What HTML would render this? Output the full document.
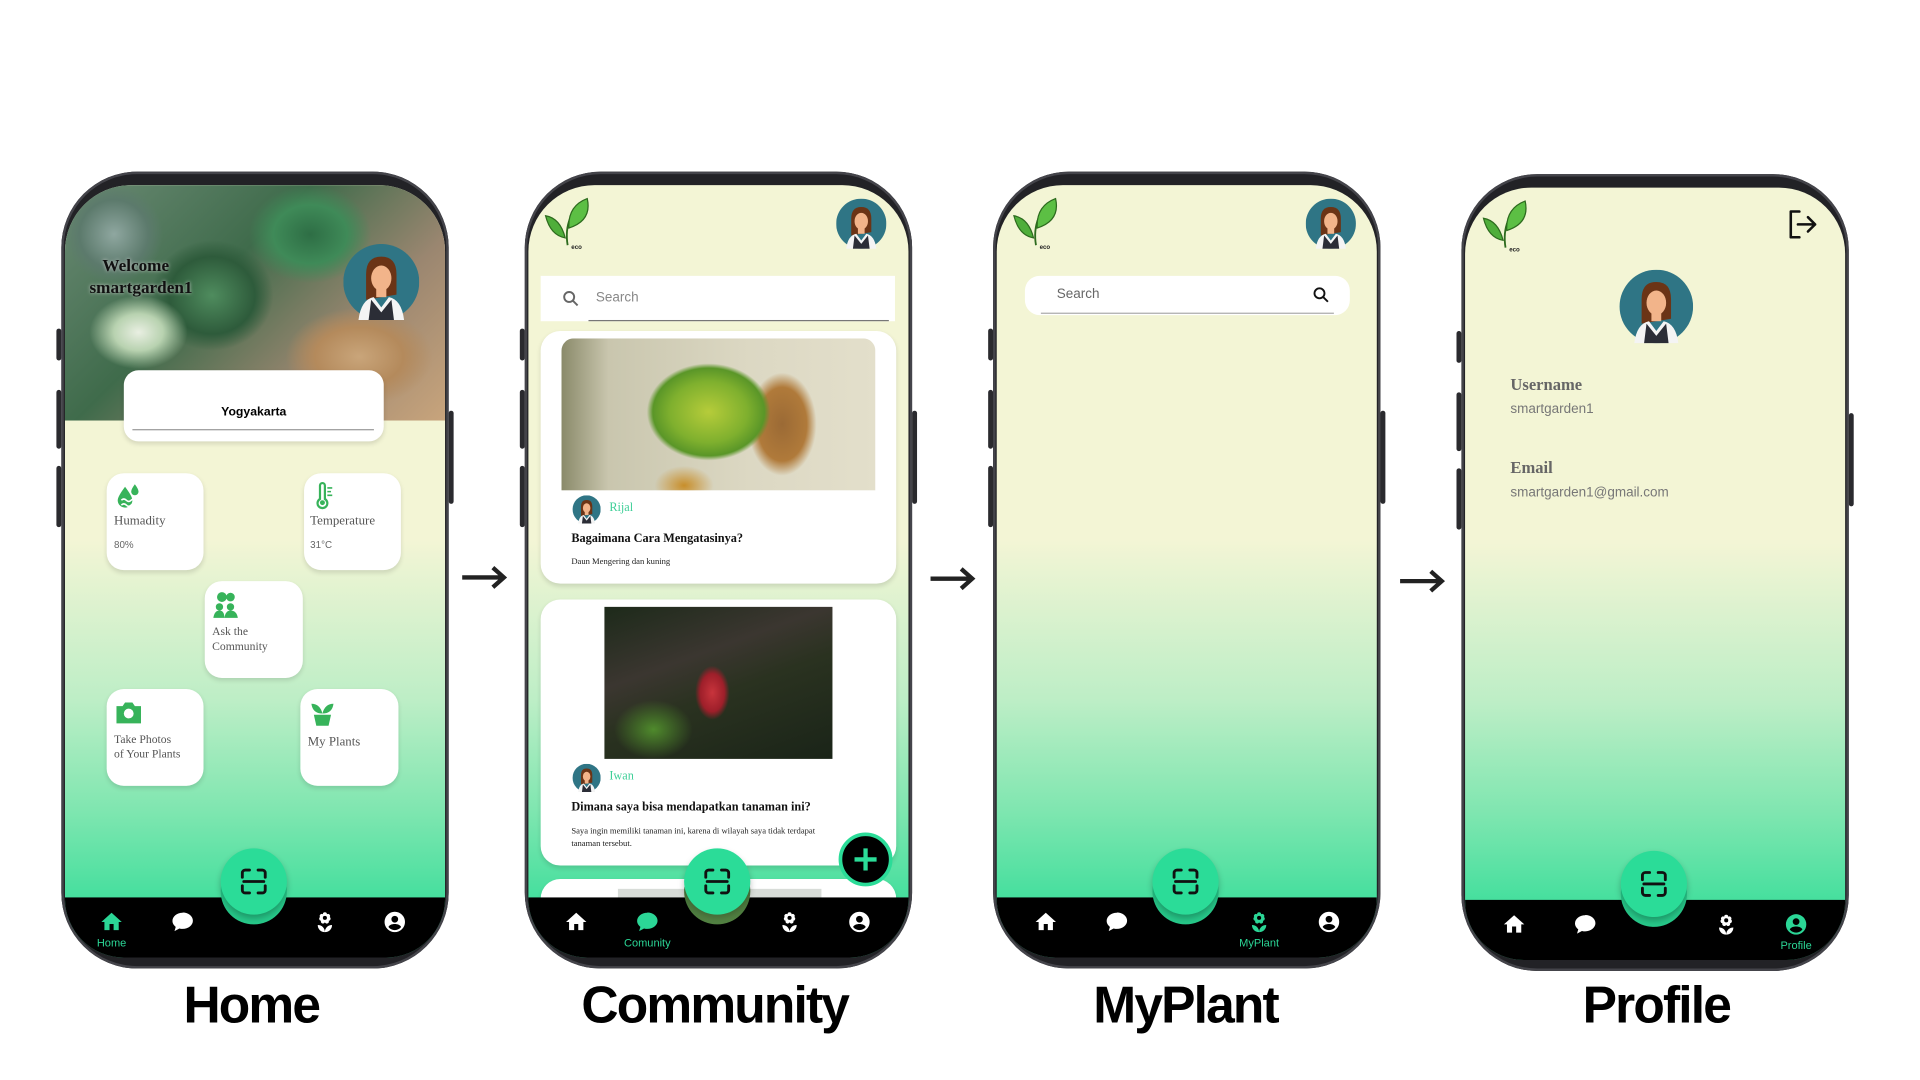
<!DOCTYPE html>
<html><head><meta charset="utf-8"><style>
*{margin:0;padding:0;box-sizing:border-box}
html,body{width:1920px;height:1080px;overflow:hidden;background:#fff}
#w{position:absolute;left:0;top:0;width:1552px;height:880px;transform:scale(1.226);transform-origin:0 0;font-family:"Liberation Sans",sans-serif}
.ab{position:absolute}
.phone{position:absolute;top:140px;width:316px;height:650px;border-radius:62px;background:#222226;box-shadow:inset 0 0 0 2px #44444a}
.btn{position:absolute;background:#2a2a2e;width:4px;border-radius:2px}
.scr{position:absolute;left:3px;top:11px;width:310px;height:630px;border-radius:54px 54px 48px 48px;overflow:hidden;background:linear-gradient(#f3f5d5 0px,#f3f5d5 290px,#bdeec6 420px,#7fe6b0 510px,#46df9e 581px)}
.nav{position:absolute;left:0;top:581px;width:310px;height:54px;background:#000}
.bump{position:absolute;left:127px;top:549px;width:54px;height:54px;border-radius:50%;background:#27c98a}
.fab{position:absolute;left:127px;top:541px;width:54px;height:54px;border-radius:50%;background:#2bdc98;box-shadow:0 3px 5px rgba(0,0,0,.25)}
.ni{position:absolute;top:591px;width:20px;height:20px}
.nl{position:absolute;top:613px;font-size:9px;color:#2bd696;width:60px;text-align:center}
.card{position:absolute;background:#fff;border-radius:14px;box-shadow:0 2px 4px rgba(0,0,0,.12)}
.serif{font-family:"Liberation Serif",serif}
.lbl{position:absolute;top:796px;font-weight:bold;font-size:42px;letter-spacing:-1.5px;text-align:center;width:320px;color:#000}
.arrow{position:absolute;width:40px;height:20px}
</style></head><body><div id="w">

<svg width="0" height="0" style="position:absolute">
<defs>
<symbol id="avatar" viewBox="0 0 60 60"><circle cx="30" cy="30" r="30" fill="#2f7585"/><path d="M18 24 Q18 10 30 10 Q42 10 42 24 L42 40 L18 44 Z" fill="#6b3416"/><ellipse cx="30" cy="27" rx="8" ry="10" fill="#f2b48a"/><path d="M22 20 Q30 12 38 20 L38 16 Q30 9 22 16Z" fill="#6b3416"/><rect x="26" y="34" width="8" height="8" fill="#f2b48a"/><path d="M12 60 Q14 44 24 42 L30 50 L36 42 Q46 44 48 60Z" fill="#f4f4f4"/><path d="M20 60 L22 44 L30 54 L38 44 L40 60Z" fill="#2b2d36"/></symbol>
<symbol id="scan" viewBox="0 0 24 24"><path d="M4 9V6a2 2 0 0 1 2-2h3M15 4h3a2 2 0 0 1 2 2v3M20 15v3a2 2 0 0 1-2 2h-3M9 20H6a2 2 0 0 1-2-2v-3M5 12h14" fill="none" stroke="#111" stroke-width="2" stroke-linecap="round"/></symbol>
<symbol id="home" viewBox="0 0 24 24"><path d="M10 20v-6h4v6h5v-8h3L12 3 2 12h3v8z"/></symbol>
<symbol id="chat" viewBox="0 0 24 24"><path d="M12 3C6.5 3 2 6.6 2 11c0 2.3 1.2 4.3 3.2 5.8L4 21l4.8-2.6c1 .3 2.1.4 3.2.4 5.5 0 10-3.6 10-8s-4.5-8-10-8z"/></symbol>
<symbol id="flower" viewBox="0 0 24 24"><path d="M12 2.5a2 2 0 0 1 2 2 2 2 0 0 1 2.8 2.7 2 2 0 0 1-1 3.6 2 2 0 0 1-3.8 1.5 2 2 0 0 1-3.8-1.5 2 2 0 0 1-1-3.6A2 2 0 0 1 10 4.5a2 2 0 0 1 2-2zM12 22c-4 0-7-3-7-7 4 0 7 3 7 7zm0 0c4 0 7-3 7-7-4 0-7 3-7 7z"/><circle cx="12" cy="8" r="2" fill="#000"/></symbol>
<symbol id="user" viewBox="0 0 24 24"><path d="M12 2a10 10 0 1 0 0 20 10 10 0 0 0 0-20zm0 4a3.3 3.3 0 1 1 0 6.6A3.3 3.3 0 0 1 12 6zm0 14a8 8 0 0 1-6.2-3c.6-2 3.5-3 6.2-3s5.6 1 6.2 3A8 8 0 0 1 12 20z"/></symbol>
<symbol id="logo" viewBox="0 0 40 44"><path d="M20 40 Q18 28 22 18" stroke="#2d6b1e" stroke-width="1.5" fill="none"/><path d="M18 34 Q6 32 2 16 Q14 18 18 34Z" fill="#4fae3a" stroke="#2d6b1e" stroke-width="1"/><path d="M21 26 Q20 8 36 2 Q40 20 21 26Z" fill="#5cbf44" stroke="#2d6b1e" stroke-width="1"/><text x="23" y="43" font-size="5" font-weight="bold" font-family="Liberation Sans" fill="#222">eco</text></symbol>
</defs></svg>

<!-- PHONE 1 HOME -->
<div class="btn" style="left:46px;top:268px;height:26px"></div>
<div class="btn" style="left:46px;top:318px;height:48px"></div>
<div class="btn" style="left:46px;top:380px;height:50px"></div>
<div class="btn" style="left:366px;top:335px;height:76px"></div>
<div class="phone" style="left:50px"><div class="scr">
 <div class="ab" style="left:0;top:0;width:310px;height:192px;background:
 radial-gradient(ellipse 40px 30px at 60px 120px,#e9efe2 0,#b8d2b0 50%,transparent 100%),
 radial-gradient(ellipse 50px 40px at 200px 40px,#2e6e45 0,#3f8a58 60%,transparent 100%),
 radial-gradient(ellipse 60px 40px at 240px 140px,#c9a57a 0,#b48a5c 60%,transparent 100%),
 radial-gradient(ellipse 50px 45px at 120px 90px,#4f8c5e 0,#2e5b3b 70%,transparent 100%),
 radial-gradient(ellipse 40px 40px at 40px 40px,#8fa7a0 0,#5c7a6c 70%,transparent 100%),
 linear-gradient(135deg,#6b8a74,#3f6b4b 40%,#9a8670 70%,#c8a47c)"></div>
 <div class="ab serif" style="left:20px;top:58px;font-size:14px;font-weight:bold;line-height:18px;color:#111;text-shadow:0 0 3px #ccc">&nbsp;&nbsp;&nbsp;Welcome<br>smartgarden1</div>
 <svg class="ab" style="left:227px;top:48px" width="62" height="62"><use href="#avatar"/></svg>
 <div class="card" style="left:48px;top:151px;width:212px;height:58px;border-radius:12px"><div class="ab" style="left:0;width:212px;top:29px;text-align:center;font-size:10px;font-weight:bold">Yogyakarta</div><div class="ab" style="left:7px;top:48px;width:197px;height:1px;background:#999"></div></div>
 <div class="card" style="left:34px;top:235px;width:79px;height:79px"><svg class="ab" style="left:6px;top:7px" width="24" height="24" viewBox="0 0 24 24"><path d="M9 4 Q3 12 3 15 a6 6 0 0 0 12 0 Q15 12 9 4Z M17 2 Q14 6 14 8 a3 3 0 0 0 6 0 Q20 6 17 2Z" fill="#37b35a"/><path d="M6 15 q2-2 4 0 t4 0 t4 0 M6 19 q2-2 4 0 t4 0 t4 0" stroke="#fff" stroke-width="1.3" fill="none"/></svg><div class="ab serif" style="left:6px;top:34px;font-size:10.5px;color:#555">Humadity</div><div class="ab" style="left:6px;top:54px;font-size:8px;color:#666">80%</div></div>
 <div class="card" style="left:195px;top:235px;width:79px;height:79px"><svg class="ab" style="left:7px;top:7px" width="20" height="24" viewBox="0 0 20 24"><path d="M6 3a2 2 0 0 1 4 0v11a4 4 0 1 1-4 0z" fill="none" stroke="#37b35a" stroke-width="1.8"/><circle cx="8" cy="17" r="2" fill="#37b35a"/><path d="M12 5h4M12 8h3M12 11h4" stroke="#37b35a" stroke-width="1.3"/></svg><div class="ab serif" style="left:5px;top:34px;font-size:10.5px;color:#555">Temperature</div><div class="ab" style="left:5px;top:54px;font-size:8px;color:#666">31°C</div></div>
 <div class="card" style="left:114px;top:323px;width:80px;height:79px"><svg class="ab" style="left:6px;top:7px" width="22" height="24" viewBox="0 0 22 24"><circle cx="8" cy="6" r="4" fill="#37b35a"/><circle cx="15" cy="6" r="3.5" fill="#37b35a"/><circle cx="6" cy="14" r="3" fill="#37b35a"/><circle cx="15" cy="14" r="3" fill="#37b35a"/><path d="M1 23 Q2 17 6 17 Q10 17 10 23Z M10 23 Q11 17 15 17 Q20 17 21 23Z" fill="#37b35a"/></svg><div class="ab serif" style="left:6px;top:36px;font-size:9.5px;color:#555;line-height:12px">Ask the<br>Community</div></div>
 <div class="card" style="left:34px;top:411px;width:79px;height:79px"><svg class="ab" style="left:6px;top:9px" width="24" height="20" viewBox="0 0 24 20"><path d="M2 5h5l2-3h6l2 3h5v14H2z" fill="#37b35a"/><circle cx="12" cy="11" r="4" fill="#fff"/></svg><div class="ab serif" style="left:6px;top:36px;font-size:9.5px;color:#555;line-height:12px">Take Photos<br>of Your Plants</div></div>
 <div class="card" style="left:192px;top:411px;width:80px;height:79px"><svg class="ab" style="left:6px;top:8px" width="24" height="24" viewBox="0 0 24 24"><path d="M12 12 Q4 12 3 4 Q10 4 12 12Z M12 12 Q14 4 21 4 Q20 12 12 12Z" fill="#37b35a"/><path d="M5 13h14l-2 9H7z" fill="#37b35a"/></svg><div class="ab serif" style="left:6px;top:38px;font-size:10.5px;color:#555">My Plants</div></div>
 <div class="nav"></div><div class="bump"></div><div class="fab"><svg class="ab" style="left:13px;top:13px" width="28" height="28"><use href="#scan"/></svg></div>
 <svg class="ni" style="left:28px;fill:#2bd696"><use href="#home"/></svg><div class="nl" style="left:8px">Home</div>
 <svg class="ni" style="left:86px;fill:#fff"><use href="#chat"/></svg>
 <svg class="ni" style="left:202px;fill:#fff"><use href="#flower"/></svg>
 <svg class="ni" style="left:259px;fill:#fff"><use href="#user"/></svg>
</div></div>
<div class="lbl" style="left:45px">Home</div>
<svg class="arrow" style="left:376px;top:461px" viewBox="0 0 40 20"><path d="M1 10h34M26 2l9 8-9 8" stroke="#222" stroke-width="3.5" fill="none"/></svg>

<!-- PHONE 2 COMMUNITY -->
<div class="btn" style="left:424px;top:268px;height:26px"></div>
<div class="btn" style="left:424px;top:318px;height:48px"></div>
<div class="btn" style="left:424px;top:380px;height:50px"></div>
<div class="btn" style="left:744px;top:335px;height:76px"></div>
<div class="phone" style="left:428px"><div class="scr">
 <svg class="ab" style="left:12px;top:9px" width="40" height="44"><use href="#logo"/></svg>
 <svg class="ab" style="left:251px;top:11px" width="41" height="41"><use href="#avatar"/></svg>
 <div class="ab" style="left:10px;top:74px;width:289px;height:37px;background:#fff"><svg class="ab" style="left:17px;top:11px" width="15" height="15" viewBox="0 0 24 24"><circle cx="10" cy="10" r="6.5" fill="none" stroke="#666" stroke-width="2.5"/><path d="M15 15l6 6" stroke="#666" stroke-width="2.5"/></svg><div class="ab" style="left:45px;top:12px;font-size:11px;color:#888">Search</div><div class="ab" style="left:39px;top:36px;width:245px;height:1px;background:#777"></div></div>
 <div class="card" style="left:10px;top:119px;width:290px;height:206px;border-radius:16px">
  <div class="ab" style="left:17px;top:6px;width:256px;height:124px;border-radius:10px 10px 0 0;background:
  radial-gradient(ellipse 70px 55px at 120px 60px,#b6cc3a 0,#7fb02e 45%,#5a9628 65%,transparent 72%),
  radial-gradient(ellipse 40px 60px at 180px 70px,#9b6a35 0,#b07a3a 50%,transparent 70%),
  radial-gradient(ellipse 30px 20px at 100px 120px,#c88e2a 0,transparent 80%),
  linear-gradient(90deg,#8a8a6a 0,#c9c6ae 15%,#dcd8c3 60%,#e3dfcb)"></div>
  <svg class="ab" style="left:26px;top:134px" width="23" height="23"><use href="#avatar"/></svg>
  <div class="ab serif" style="left:56px;top:139px;font-size:10px;color:#3fcf98">Rijal</div>
  <div class="ab serif" style="left:25px;top:164px;font-size:10px;font-weight:bold;color:#111">Bagaimana Cara Mengatasinya?</div>
  <div class="ab serif" style="left:25px;top:184px;font-size:7px;color:#222">Daun Mengering dan kuning</div>
 </div>
 <div class="card" style="left:10px;top:338px;width:290px;height:217px;border-radius:16px">
  <div class="ab" style="left:52px;top:6px;width:186px;height:124px;background:
  radial-gradient(ellipse 14px 22px at 88px 70px,#c8343c 0,#9e1f2a 70%,transparent 100%),
  radial-gradient(ellipse 40px 30px at 40px 100px,#4f8a2c 0,transparent 80%),
  linear-gradient(160deg,#1d2a1a 0,#3b3630 35%,#2a3220 55%,#1a2418 100%)"></div>
  <svg class="ab" style="left:26px;top:134px" width="23" height="23"><use href="#avatar"/></svg>
  <div class="ab serif" style="left:56px;top:139px;font-size:10px;color:#3fcf98">Iwan</div>
  <div class="ab serif" style="left:25px;top:164px;font-size:10px;font-weight:bold;color:#111">Dimana saya bisa mendapatkan tanaman ini?</div>
  <div class="ab serif" style="left:25px;top:184px;font-size:7px;color:#222;line-height:10px">Saya ingin memiliki tanaman ini, karena di wilayah saya tidak terdapat<br>tanaman tersebut.</div>
 </div>
 <div class="card" style="left:10px;top:566px;width:290px;height:40px;border-radius:16px"><div class="ab" style="left:63px;top:8px;width:166px;height:30px;background:#d8dcd8"></div></div>
 <div class="ab" style="left:253px;top:528px;width:44px;height:44px;border-radius:50%;background:#000;border:3px solid #2bdc98"><svg class="ab" style="left:8px;top:8px" width="22" height="22" viewBox="0 0 22 22"><path d="M11 2v18M2 11h18" stroke="#2bdc98" stroke-width="3.5"/></svg></div>
 <div class="nav"></div><div class="bump" style="background:radial-gradient(circle at 50% 60%,#6a9a55,#3a6a30)"></div><div class="fab"><svg class="ab" style="left:13px;top:13px" width="28" height="28"><use href="#scan"/></svg></div>
 <svg class="ni" style="left:29px;fill:#fff"><use href="#home"/></svg>
 <svg class="ni" style="left:87px;fill:#2bd696"><use href="#chat"/></svg><div class="nl" style="left:67px">Comunity</div>
 <svg class="ni" style="left:203px;fill:#fff"><use href="#flower"/></svg>
 <svg class="ni" style="left:260px;fill:#fff"><use href="#user"/></svg>
</div></div>
<div class="lbl" style="left:423px">Community</div>
<svg class="arrow" style="left:758px;top:462px" viewBox="0 0 40 20"><path d="M1 10h34M26 2l9 8-9 8" stroke="#222" stroke-width="3.5" fill="none"/></svg>

<!-- PHONE 3 MYPLANT -->
<div class="btn" style="left:806px;top:268px;height:26px"></div>
<div class="btn" style="left:806px;top:318px;height:48px"></div>
<div class="btn" style="left:806px;top:380px;height:50px"></div>
<div class="btn" style="left:1126px;top:335px;height:76px"></div>
<div class="phone" style="left:810px"><div class="scr">
 <svg class="ab" style="left:12px;top:9px" width="40" height="44"><use href="#logo"/></svg>
 <svg class="ab" style="left:252px;top:11px" width="41" height="41"><use href="#avatar"/></svg>
 <div class="ab" style="left:23px;top:74px;width:265px;height:32px;background:#fff;border-radius:12px"><div class="ab" style="left:26px;top:9px;font-size:11px;color:#666">Search</div><svg class="ab" style="left:234px;top:8px" width="15" height="15" viewBox="0 0 24 24"><circle cx="10" cy="10" r="6.5" fill="none" stroke="#111" stroke-width="2.5"/><path d="M15 15l6 6" stroke="#111" stroke-width="2.5"/></svg><div class="ab" style="left:13px;top:30px;width:239px;height:1px;background:#aaa"></div></div>
 <div class="nav"></div><div class="bump"></div><div class="fab"><svg class="ab" style="left:13px;top:13px" width="28" height="28"><use href="#scan"/></svg></div>
 <svg class="ni" style="left:30px;fill:#fff"><use href="#home"/></svg>
 <svg class="ni" style="left:88px;fill:#fff"><use href="#chat"/></svg>
 <svg class="ni" style="left:204px;fill:#2bd696"><use href="#flower"/></svg><div class="nl" style="left:184px">MyPlant</div>
 <svg class="ni" style="left:261px;fill:#fff"><use href="#user"/></svg>
</div></div>
<div class="lbl" style="left:807px">MyPlant</div>
<svg class="arrow" style="left:1141px;top:464px" viewBox="0 0 40 20"><path d="M1 10h34M26 2l9 8-9 8" stroke="#222" stroke-width="3.5" fill="none"/></svg>

<!-- PHONE 4 PROFILE -->
<div class="btn" style="left:1188px;top:270px;height:26px"></div>
<div class="btn" style="left:1188px;top:320px;height:48px"></div>
<div class="btn" style="left:1188px;top:382px;height:50px"></div>
<div class="btn" style="left:1508px;top:337px;height:76px"></div>
<div class="phone" style="left:1192px;top:142px"><div class="scr">
 <svg class="ab" style="left:13px;top:9px" width="40" height="44"><use href="#logo"/></svg>
 <svg class="ab" style="left:261px;top:16px" width="28" height="28" viewBox="0 0 24 24"><path d="M10 3H4v18h6M9 12h12M16 7l5 5-5 5" fill="none" stroke="#111" stroke-width="1.8" stroke-linecap="round" stroke-linejoin="round"/></svg>
 <svg class="ab" style="left:126px;top:67px" width="60" height="60"><use href="#avatar"/></svg>
 <div class="ab serif" style="left:37px;top:153px;font-size:13.5px;font-weight:bold;color:#666">Username</div>
 <div class="ab" style="left:37px;top:175px;font-size:11px;color:#777">smartgarden1</div>
 <div class="ab serif" style="left:37px;top:221px;font-size:13.5px;font-weight:bold;color:#666">Email</div>
 <div class="ab" style="left:37px;top:243px;font-size:11px;color:#777">smartgarden1@gmail.com</div>
 <div class="nav"></div><div class="bump"></div><div class="fab"><svg class="ab" style="left:13px;top:13px" width="28" height="28"><use href="#scan"/></svg></div>
 <svg class="ni" style="left:30px;fill:#fff"><use href="#home"/></svg>
 <svg class="ni" style="left:88px;fill:#fff"><use href="#chat"/></svg>
 <svg class="ni" style="left:203px;fill:#fff"><use href="#flower"/></svg>
 <svg class="ni" style="left:260px;fill:#2bd696"><use href="#user"/></svg><div class="nl" style="left:240px">Profile</div>
</div></div>
<div class="lbl" style="left:1191px">Profile</div>

</div></body></html>
